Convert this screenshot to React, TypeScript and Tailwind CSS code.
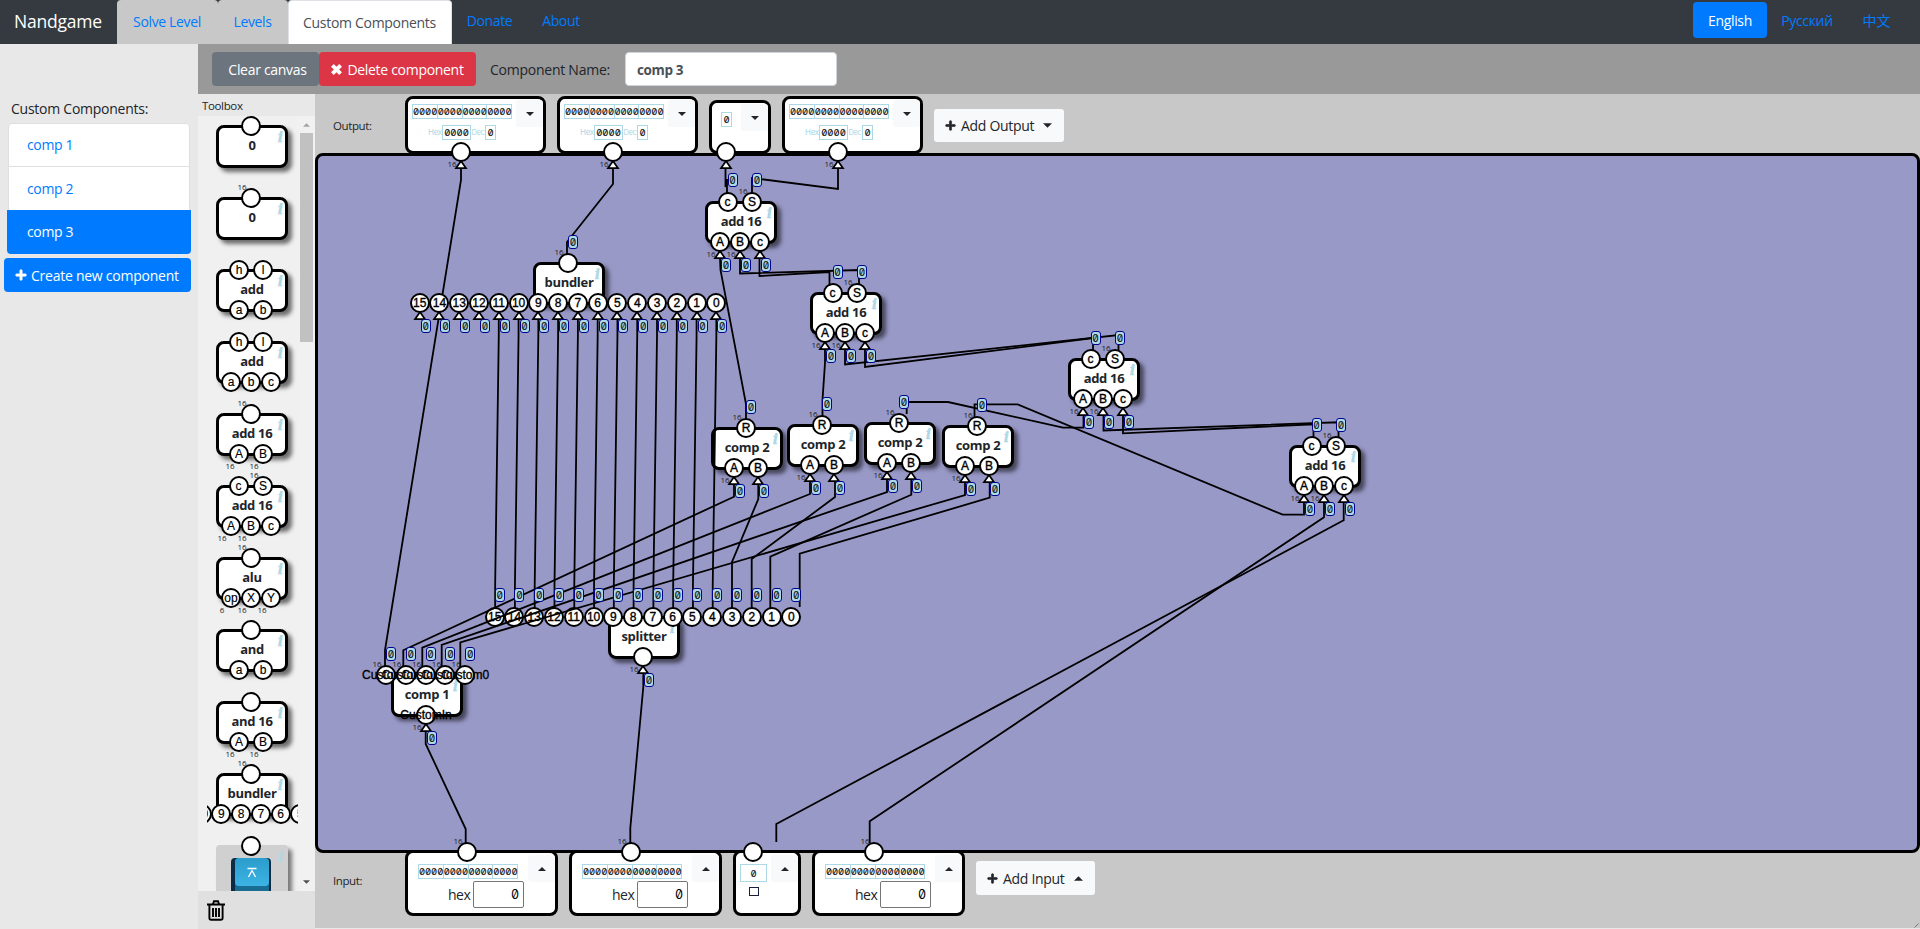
import React from "react";
import { FaPlus } from "react-icons/fa";

type Pt = [number, number];
type Pin = { x: number; label?: string; wide?: boolean };
type Part = {
  name: string;
  left: number;
  top: number;
  outs: Pin[];
  ins: Pin[];
  above?: boolean;
};

const pin = (x: number, label = "", wide = false): Pin => ({ x, label, wide });
const ADD_OUT = [pin(22.5, "c"), pin(47, "S", true)];
const ADD_IN = [pin(15, "A", true), pin(35, "B", true), pin(55, "c")];
const COMP2_OUT = [pin(35, "R", true)];
const COMP2_IN = [pin(23, "A", true), pin(47, "B")];
const BITS = Array.from({ length: 16 }, (_, i) => pin(35 + (i - 7.5) * 19.78, String(15 - i)));

const parts: Part[] = [
  { name: "add 16", left: 705, top: 200.5, outs: ADD_OUT, ins: ADD_IN },
  { name: "add 16", left: 810, top: 292.4, outs: ADD_OUT, ins: ADD_IN },
  { name: "add 16", left: 1068, top: 358, outs: ADD_OUT, ins: ADD_IN },
  { name: "add 16", left: 1289, top: 445.4, outs: ADD_OUT, ins: ADD_IN },
  { name: "comp 2", left: 711, top: 427, outs: COMP2_OUT, ins: COMP2_IN },
  { name: "comp 2", left: 787, top: 424, outs: COMP2_OUT, ins: COMP2_IN },
  { name: "comp 2", left: 864, top: 422, outs: COMP2_OUT, ins: COMP2_IN },
  { name: "comp 2", left: 942, top: 425, outs: COMP2_OUT, ins: COMP2_IN },
  { name: "bundler", left: 533, top: 262, outs: [pin(35, "", true)], ins: BITS, above: true },
  { name: "splitter", left: 608, top: 615.6, outs: BITS, ins: [pin(35, "", true)] },
  {
    name: "comp 1",
    left: 391,
    top: 674.4,
    outs: [4, 3, 2, 1, 0].map((n, i) => pin(-5 + i * 19.8, "Custom" + n, true)),
    ins: [pin(35, "CustomIn", true)],
  },
];

const toolbox: Part[] = [
  { name: "0", outs: [pin(35)], ins: [] },
  { name: "0", outs: [pin(35, "", true)], ins: [] },
  { name: "add", outs: [pin(23, "h"), pin(47, "l")], ins: [pin(23, "a"), pin(47, "b")] },
  { name: "add", outs: [pin(23, "h"), pin(47, "l")], ins: [pin(15, "a"), pin(35, "b"), pin(55, "c")] },
  { name: "add 16", outs: [pin(35, "", true)], ins: [pin(23, "A", true), pin(47, "B", true)] },
  { name: "add 16", outs: ADD_OUT, ins: ADD_IN },
  { name: "alu", outs: [pin(35, "", true)], ins: [pin(15, "op", true), pin(35, "X", true), pin(55, "Y", true)] },
  { name: "and", outs: [pin(35)], ins: [pin(23, "a"), pin(47, "b")] },
  { name: "and 16", outs: [pin(35)], ins: [pin(23, "A", true), pin(47, "B", true)] },
  { name: "bundler", outs: [pin(35, "", true)], ins: BITS },
].map((p, i) => ({ ...p, left: 9, top: 9 + i * 72 }));

const bitWires: Pt[][] = Array.from({ length: 12 }, (_, i) => {
  const from = 568 + (i + 4 - 7.5) * 19.78;
  const to = 643.5 + (i - 7.5) * 19.78;
  return [[from, 319], [from, 336], [to, 585], [to, 608]];
});

const wires: Pt[][] = [
  [[461, 168], [461, 180], [385, 650], [385, 667]],
  [[613, 168], [613, 184], [567, 242], [567, 254]],
  [[725.5, 168], [725.5, 187], [727, 179], [727, 193]],
  [[838, 168], [838, 189], [752, 178], [752, 193]],
  [[720, 258], [720.5, 270], [746, 404], [746, 419]],
  [[740, 258], [740, 273.5], [859, 270], [859, 285]],
  [[759.5, 258], [759.5, 276], [829.5, 272], [829.5, 286]],
  [[825, 349], [825, 363], [822.5, 400], [822.5, 416]],
  [[845, 349], [845, 364.5], [1118.5, 335], [1118.5, 350]],
  [[865, 349], [865, 367], [1093, 338], [1093, 350]],
  [[1083.5, 415], [1083.5, 427.7], [1063, 427.7], [948, 402], [906.7, 402], [906.7, 414]],
  [[1103.5, 415], [1103.5, 430.5], [1338.5, 422.3], [1338.5, 437]],
  [[1123, 415], [1123, 433.3], [1313.5, 424.3], [1313.5, 437]],
  [[1304, 502], [1304, 514.7], [1282.7, 514.7], [1017.7, 404.3], [974.5, 404.3], [974.5, 418]],
  [[1324, 502], [1324, 517.3], [869.7, 821.3], [869.7, 843]],
  [[1343.7, 502], [1343.7, 520.3], [776.3, 824], [776.3, 842]],
  [[734, 484], [734, 496.7], [403.3, 650.3], [403.3, 667]],
  [[810, 481], [810, 494], [422.3, 647.7], [422.3, 667]],
  [[887, 479], [887, 492], [441.7, 645], [441.7, 667]],
  [[965, 482], [965, 495], [460.3, 642.3], [460.3, 667]],
  [[758.3, 484], [758.3, 499], [732, 562], [732, 608]],
  [[835, 481], [835, 497], [751.7, 559], [751.7, 608]],
  [[911.3, 479], [911.3, 494.7], [770.3, 556.7], [770.3, 608]],
  [[989.7, 482], [989.7, 497.7], [799.7, 553.7], [799.7, 607]],
  [[425.7, 731], [425.7, 744], [465.7, 829], [465.7, 843]],
  [[643.3, 673], [643.3, 687], [630.3, 828], [630.3, 843]],
  ...bitWires,
];

const outPins = [
  { x: 461, wide: true },
  { x: 613, wide: true },
  { x: 725.5, wide: false },
  { x: 838, wide: true },
];
const inPins = [
  { x: 467, wide: true },
  { x: 631, wide: true },
  { x: 752.7, wide: false },
  { x: 874, wide: true },
];

const at = (x: number, y: number) => ({ left: x, top: y });

function Circle({ x, y, label, live }: { x: number; y: number; label?: string; live?: boolean }) {
  return (
    <span
      className={
        "absolute flex size-5 items-center justify-center rounded-full border-2 border-black bg-white font-['Liberation_Sans',sans-serif] text-[12px] leading-none whitespace-nowrap text-black " +
        (live ? "[-webkit-text-stroke:0.35px_#000]" : "[-webkit-text-stroke:0.15px_#000]")
      }
      style={at(x - 10, y - 10)}
    >
      {label}
    </span>
  );
}

function Width({ x, y, text = "16" }: { x: number; y: number; text?: string }) {
  return (
    <span
      className="absolute w-4 text-center font-['Open_Sans',sans-serif] text-[8px] leading-[8px] text-[#222]"
      style={at(x - 17, y - 4)}
    >
      {text}
    </span>
  );
}

function Triangle({ x, y }: { x: number; y: number }) {
  return (
    <svg className="absolute h-[10px] w-[14px]" viewBox="0 0 14 10" style={at(x - 7, y + 8)}>
      <path d="M7 1 L12 8.2 H2 Z" fill="#fff" stroke="#000" strokeWidth="1.7" />
    </svg>
  );
}

function Value({ x, y }: { x: number; y: number }) {
  return (
    <span
      className="absolute flex h-[14px] w-[10px] items-center justify-center rounded-[3px] border border-[#00008b] bg-[#add8e6] font-['Inter',sans-serif] text-[10px] leading-none text-[#111] [font-feature-settings:'zero','tnum'] [-webkit-text-stroke:0.15px_#111]"
      style={at(x - 5, y - 7)}
    >
      0
    </span>
  );
}

function Info() {
  return (
    <span className="absolute top-[1px] right-[2px] font-['DejaVu_Serif',serif] text-[14px] leading-[17px] font-bold text-[#add8e6] italic [-webkit-text-stroke:0.3px_#add8e6]">
      i
    </span>
  );
}

function PartBox({ part, live }: { part: Part; live?: boolean }) {
  return (
    <div className="absolute h-[43px] w-[72px]" style={at(part.left, part.top)}>
      <div className="relative size-full rounded-[8px] border-3 border-black bg-white text-center shadow-[4px_4px_4px_rgba(0,0,0,0.55)]">
        <span className="block pt-[8px] font-['Open_Sans',sans-serif] text-[13px] leading-[18px] font-bold tracking-[-0.3px] text-[#212529]">
          {part.name}
        </span>
        <Info />
      </div>
      {part.outs.map((p, i) => (
        <React.Fragment key={"o" + i}>
          {p.wide && <Width x={p.x} y={-10} />}
          <Circle x={p.x} y={1} label={p.label} live={live} />
        </React.Fragment>
      ))}
      {part.ins.map((p, i) => (
        <React.Fragment key={"i" + i}>
          {p.wide && <Width x={p.x} y={53} text={p.label === "op" ? "6" : "16"} />}
          {live && <Triangle x={p.x} y={41} />}
          <Circle x={p.x} y={41} label={p.label} live={live} />
        </React.Fragment>
      ))}
    </div>
  );
}

function Wires() {
  return (
    <svg className="pointer-events-none absolute top-0 left-0 h-[929px] w-[1920px]" viewBox="0 0 1920 929">
      {wires.map((w, i) => (
        <polyline key={i} points={w.map((p) => p.join(",")).join(" ")} fill="none" stroke="#000" strokeWidth="1.8" />
      ))}
    </svg>
  );
}

function Canvas() {
  return (
    <div className="relative z-10 h-[700px] rounded-[8px] border-3 border-black bg-[#9999c8]">
      <div className="absolute -top-[156px] -left-[318px]">
        {parts.filter((p) => !p.above).map((p, i) => <PartBox key={i} part={p} live />)}
        <Wires />
        {parts.filter((p) => p.above).map((p, i) => <PartBox key={i} part={p} live />)}
        {parts.map((p, i) => (
          <React.Fragment key={i}>
            {p.outs.map((o, j) => <Value key={"o" + j} x={p.left + o.x + 5} y={p.top - 20.5} />)}
            {p.ins.map((o, j) => <Value key={"i" + j} x={p.left + o.x + 6} y={p.top + 64} />)}
          </React.Fragment>
        ))}
      </div>
    </div>
  );
}

function EdgePins() {
  return (
    <div className="absolute -top-[94px] -left-[315px] z-30">
      {outPins.map((p) => (
        <React.Fragment key={p.x}>
          {p.wide && <Width x={p.x} y={163.5} />}
          <Triangle x={p.x} y={152} />
          <Circle x={p.x} y={152} />
        </React.Fragment>
      ))}
      {inPins.map((p) => (
        <React.Fragment key={p.x}>
          {p.wide && <Width x={p.x} y={840.5} />}
          <Circle x={p.x} y={852} />
        </React.Fragment>
      ))}
    </div>
  );
}

function Caret({ up }: { up?: boolean }) {
  return (
    <svg className="h-[4px] w-[8px] shrink-0" viewBox="0 0 8 4">
      <path d={up ? "M0 4 L4 0 L8 4 Z" : "M0 0 L4 4 L8 0 Z"} fill="#212529" />
    </svg>
  );
}

function MenuButton({ up }: { up?: boolean }) {
  return (
    <button className="flex h-[27px] w-[27px] shrink-0 items-center justify-center rounded-[3px] bg-[#f8f9fa]">
      <Caret up={up} />
    </button>
  );
}

const MONO =
  "font-['Inter',sans-serif] text-[9.5px] leading-[13px] text-[#111] [font-feature-settings:'zero','tnum'] [-webkit-text-stroke:0.15px]";

function Word() {
  return (
    <div className={"flex border-l border-[#add8e6] " + MONO}>
      {[0, 1, 2, 3].map((i) => (
        <span key={i} className="h-[15px] w-[24.75px] border-y border-r border-[#add8e6] text-center tracking-[-0.1px]">
          0000
        </span>
      ))}
    </div>
  );
}

function OutputWord() {
  return (
    <div className="flex h-[58px] w-[141px] justify-between rounded-[8px] border-3 border-black bg-white pl-[4px]">
      <div className="flex flex-col pt-[5px]">
        <Word />
        <div className={"mt-[6px] flex pl-[16px] " + MONO}>
          <span className="w-[14px] text-[8px] leading-[15px] tracking-[-0.3px] text-[#add8e6] [-webkit-text-stroke:0]">Hex</span>
          <span className="h-[15px] w-[29px] border border-[#add8e6] text-center">0000</span>
          <span className="w-[14px] text-center text-[7.5px] leading-[15px] tracking-[-0.3px] text-[#add8e6] [-webkit-text-stroke:0]">Dec</span>
          <span className="h-[15px] w-[11px] border border-[#add8e6] text-center">0</span>
        </div>
      </div>
      <div className="pt-px">
        <MenuButton />
      </div>
    </div>
  );
}

function InputWord() {
  return (
    <div className="flex h-[66px] w-[153px] justify-between rounded-[8px] border-3 border-black bg-white pl-[10px]">
      <div className="flex flex-col pt-[11px]">
        <Word />
        <div className="mt-[2px] flex items-center pl-[30px]">
          <span className="w-[25px] font-['Open_Sans',sans-serif] text-[14px] leading-[20px] tracking-[-0.5px] text-[#212529]">hex</span>
          <span className="h-[27px] w-[51px] rounded-[2px] border border-[#767676] pr-[4px] text-right font-['Inter',sans-serif] text-[12.5px] leading-[25px] text-black [font-feature-settings:'zero','tnum']">
            0
          </span>
        </div>
      </div>
      <div className="pt-[2px]">
        <MenuButton up />
      </div>
    </div>
  );
}

function OutputBar() {
  return (
    <div className="relative z-20 flex h-[60px] items-end">
      <span className="w-[90px] self-start pt-[24px] pl-[18px] text-[11.5px] leading-[16px] tracking-[-0.4px]">Output:</span>
      <OutputWord />
      <div className="w-[11px]" />
      <OutputWord />
      <div className="w-[11px]" />
      <div className="flex h-[54px] w-[62px] justify-between rounded-[8px] border-3 border-black bg-white pl-[9px]">
        <span className={"mt-[9px] h-[15px] w-[11px] border border-[#add8e6] text-center " + MONO}>0</span>
        <div className="pt-[1px]">
          <MenuButton />
        </div>
      </div>
      <div className="w-[11px]" />
      <OutputWord />
      <button className="mb-[12px] ml-[11px] flex h-[33px] w-[130px] items-center rounded-[3px] bg-[#f8f9fa] pl-[11px] text-[14px] tracking-[-0.3px]">
        <FaPlus className="mr-[5px] size-[11px] [stroke:#212529] [stroke-width:30px]" />
        <span className="w-[82px] text-left">Add Output</span>
        <svg className="h-[5px] w-[9px] shrink-0" viewBox="0 0 8 4"><path d="M0 0 L4 4 L8 0 Z" fill="#212529" /></svg>
      </button>
    </div>
  );
}

function InputBar() {
  return (
    <div className="relative z-20 -mt-[3px] flex h-[78px] items-start">
      <span className="w-[90px] pt-[23px] pl-[18px] text-[11.5px] leading-[16px] tracking-[-0.4px]">Input:</span>
      <InputWord />
      <div className="w-[11px]" />
      <InputWord />
      <div className="w-[11px]" />
      <div className="flex h-[66px] w-[68px] justify-between rounded-[8px] border-3 border-black bg-white pl-[4px]">
        <div className="flex w-[27px] flex-col items-center pt-[11px]">
          <span className={"h-[18px] w-[27px] border border-[#add8e6] pt-[2px] text-center " + MONO}>0</span>
          <span className="mt-[5px] h-[9px] w-[10px] border border-[#1a1f3a]" />
        </div>
        <div className="pt-[2px]">
          <MenuButton up />
        </div>
      </div>
      <div className="w-[11px]" />
      <InputWord />
      <button className="mt-[11px] ml-[11px] flex h-[34px] w-[119px] items-center rounded-[3px] bg-[#f8f9fa] pl-[11px] text-[14px] tracking-[-0.3px]">
        <FaPlus className="mr-[5px] size-[11px] [stroke:#212529] [stroke-width:30px]" />
        <span className="w-[71px] text-left">Add Input</span>
        <svg className="h-[5px] w-[9px] shrink-0" viewBox="0 0 8 4"><path d="M0 4 L4 0 L8 4 Z" fill="#212529" /></svg>
      </button>
    </div>
  );
}

function RelayTile() {
  return (
    <div className="absolute top-[729px] left-[9px] h-[60px] w-[72px]">
      <div className="relative size-full rounded-[4px] bg-[#d0d0d0] shadow-[4px_4px_4px_rgba(0,0,0,0.5)]">
        <div className="absolute top-[13px] left-[15px] h-[46px] w-[40px] rounded-[4px] bg-[#0b2c44]" />
        <div className="absolute top-[13px] left-[19px] h-[44px] w-[34px] rounded-[4px] bg-[#1a6d92]" />
        <div className="absolute top-[13px] left-[19px] flex h-[28px] w-[34px] items-center justify-center rounded-[4px] bg-linear-to-b from-[#2b9ccc] to-[#3cb4e4]">
          <svg className="h-[11px] w-[10px]" viewBox="0 0 10 11" fill="none" stroke="#fff" strokeWidth="1.3">
            <path d="M0.5 1.5 H9.5 M1.5 10 L5 3.5 L8.5 10" />
          </svg>
        </div>
        <span className="absolute top-[4px] right-[5px] font-['DejaVu_Serif',serif] text-[14px] leading-[17px] font-bold text-[#add8e6] italic">
          i
        </span>
      </div>
      <Circle x={35} y={1} />
    </div>
  );
}

function Toolbox() {
  return (
    <div className="flex w-[117px] shrink-0 flex-col bg-[#e0e0e0]">
      <div className="h-[22px] bg-[#e8e8e8] pt-[4px] pl-[4px] text-[11.5px] leading-[16px] tracking-[-0.35px]">Toolbox</div>
      <div className="flex h-[775px] bg-[#f0f0f0] pl-[9px]">
        <div className="relative h-full w-[91px] overflow-hidden">
          {toolbox.map((p, i) => (
            <PartBox key={i} part={p} />
          ))}
          <RelayTile />
        </div>
        <div className="flex w-[17px] flex-col items-center justify-between bg-[#f1f1f1] py-[7px]">
          <div className="flex flex-col items-center">
            <svg className="h-[4px] w-[7px]" viewBox="0 0 8 4"><path d="M0 4 L4 0 L8 4 Z" fill="#a3a3a3" /></svg>
            <div className="mt-[6px] h-[209px] w-[13px] bg-[#c1c1c1]" />
          </div>
          <svg className="h-[4px] w-[7px]" viewBox="0 0 8 4"><path d="M0 0 L4 4 L8 0 Z" fill="#505050" /></svg>
        </div>
      </div>
      <svg className="mt-[9px] ml-[9px] h-[21px] w-[18px]" viewBox="0 0 18 21" fill="none" stroke="#000" strokeWidth="1.9">
        <path d="M0 4.5 H18 M6 4 L7 1.2 H11 L12 4 M2.4 5 V18 Q2.4 19.8 4.2 19.8 H13.8 Q15.6 19.8 15.6 18 V5 M6 8 V17 M9 8 V17 M12 8 V17" />
      </svg>
    </div>
  );
}

function Header() {
  return (
    <header className="flex h-11 bg-[#343a40] text-[14px] tracking-[-0.35px] text-[#007bff]">
      <div className="w-[117px] pl-[14px] text-[17.5px] leading-[42px] tracking-[-0.2px] text-white">Nandgame</div>
      <div className="w-[101px] rounded-t-[4px] bg-[#c8c8c8] pr-[1px] text-center leading-[44px]">Solve Level</div>
      <div className="w-[70px] rounded-t-[4px] bg-[#c8c8c8] pr-[1px] text-center leading-[44px]">Levels</div>
      <div className="w-[164px] rounded-t-[4px] border border-b-0 border-[#dee2e6] bg-white pr-[1px] text-center leading-[43px] tracking-[-0.3px] text-[#495057]">
        Custom Components
      </div>
      <div className="w-[75px] text-center leading-[42px]">Donate</div>
      <div className="w-[68px] text-center leading-[42px]">About</div>
      <div className="ml-auto flex pt-[2px] pr-[14px]">
        <div className="h-9 w-[74px] rounded-[4px] bg-[#007bff] text-center leading-[38px] text-white">English</div>
        <div className="w-[80px] text-center leading-[38px]">Русский</div>
        <div className="w-[59px] text-center font-['Noto_Sans_CJK_SC',sans-serif] leading-[36px] tracking-normal">中文</div>
      </div>
    </header>
  );
}

function Sidebar() {
  return (
    <aside className="w-[198px] shrink-0 bg-[#e8e8e8] pt-[54px] text-[14px] tracking-[-0.35px]">
      <div className="h-[25px] pl-[11px] leading-[22px] tracking-[-0.25px]">Custom Components:</div>
      <div className="mx-[8px] h-[44px] w-[182px] rounded-t-[4px] border border-[#dfdfdf] bg-white pl-[18px] leading-[42px] text-[#007bff]">comp 1</div>
      <div className="mx-[8px] h-[43px] w-[182px] border-x border-[#dfdfdf] bg-white pl-[18px] leading-[44px] text-[#007bff]">comp 2</div>
      <div className="ml-[7px] h-[44px] w-[184px] rounded-b-[4px] bg-[#007bff] pl-[20px] leading-[44px] text-white">comp 3</div>
      <button className="mt-[4px] ml-[4px] flex h-[34px] w-[187px] items-center rounded-[4px] bg-[#007bff] pl-[11px] tracking-[-0.25px] text-white">
        <FaPlus className="mr-[4px] size-[12px] [stroke:#fff] [stroke-width:30px]" />
        Create new component
      </button>
    </aside>
  );
}

function Toolbar() {
  return (
    <div className="flex h-[50px] items-center bg-[#999] pl-[14px] text-[14px] tracking-[-0.35px]">
      <button className="h-[34px] w-[107px] rounded-[4px] bg-[#6c757d] pl-[4px] tracking-[-0.3px] text-white">Clear canvas</button>
      <button className="flex h-[34px] w-[157px] items-center justify-center gap-[5px] rounded-[4px] bg-[#dc3545] tracking-[-0.3px] text-white">
        <svg className="size-[11px]" viewBox="0 0 11 11" stroke="#fff" strokeWidth="3.8">
          <path d="M1.4 1.4 L9.6 9.6 M9.6 1.4 L1.4 9.6" />
        </svg>
        Delete component
      </button>
      <span className="w-[149px] pl-[14px] tracking-[-0.25px]">Component Name:</span>
      <div className="h-[34px] w-[212px] rounded-[4px] border border-[#ced4da] bg-white pl-[11px] text-[13.5px] leading-[34px] font-bold text-[#495057]">
        comp 3
      </div>
    </div>
  );
}

export default function App() {
  return (
    <div className="flex h-[929px] w-[1920px] flex-col overflow-hidden bg-[#e8e8e8] font-['Open_Sans',sans-serif] text-[#212529]">
      <Header />
      <div className="flex flex-1">
        <Sidebar />
        <main className="flex w-[1722px] flex-col">
          <Toolbar />
          <div className="flex h-[835px]">
            <Toolbox />
            <section className="relative h-[834px] w-[1605px] bg-[#c8c8c8]">
              <OutputBar />
              <div className="-mt-px">
                <Canvas />
              </div>
              <InputBar />
              <EdgePins />
              <svg className="absolute right-[1px] bottom-0 size-[5px]" viewBox="0 0 5 5" stroke="#777" strokeWidth="1">
                <path d="M0.5 4.5 L4.5 0.5" />
              </svg>
            </section>
          </div>
        </main>
      </div>
    </div>
  );
}
